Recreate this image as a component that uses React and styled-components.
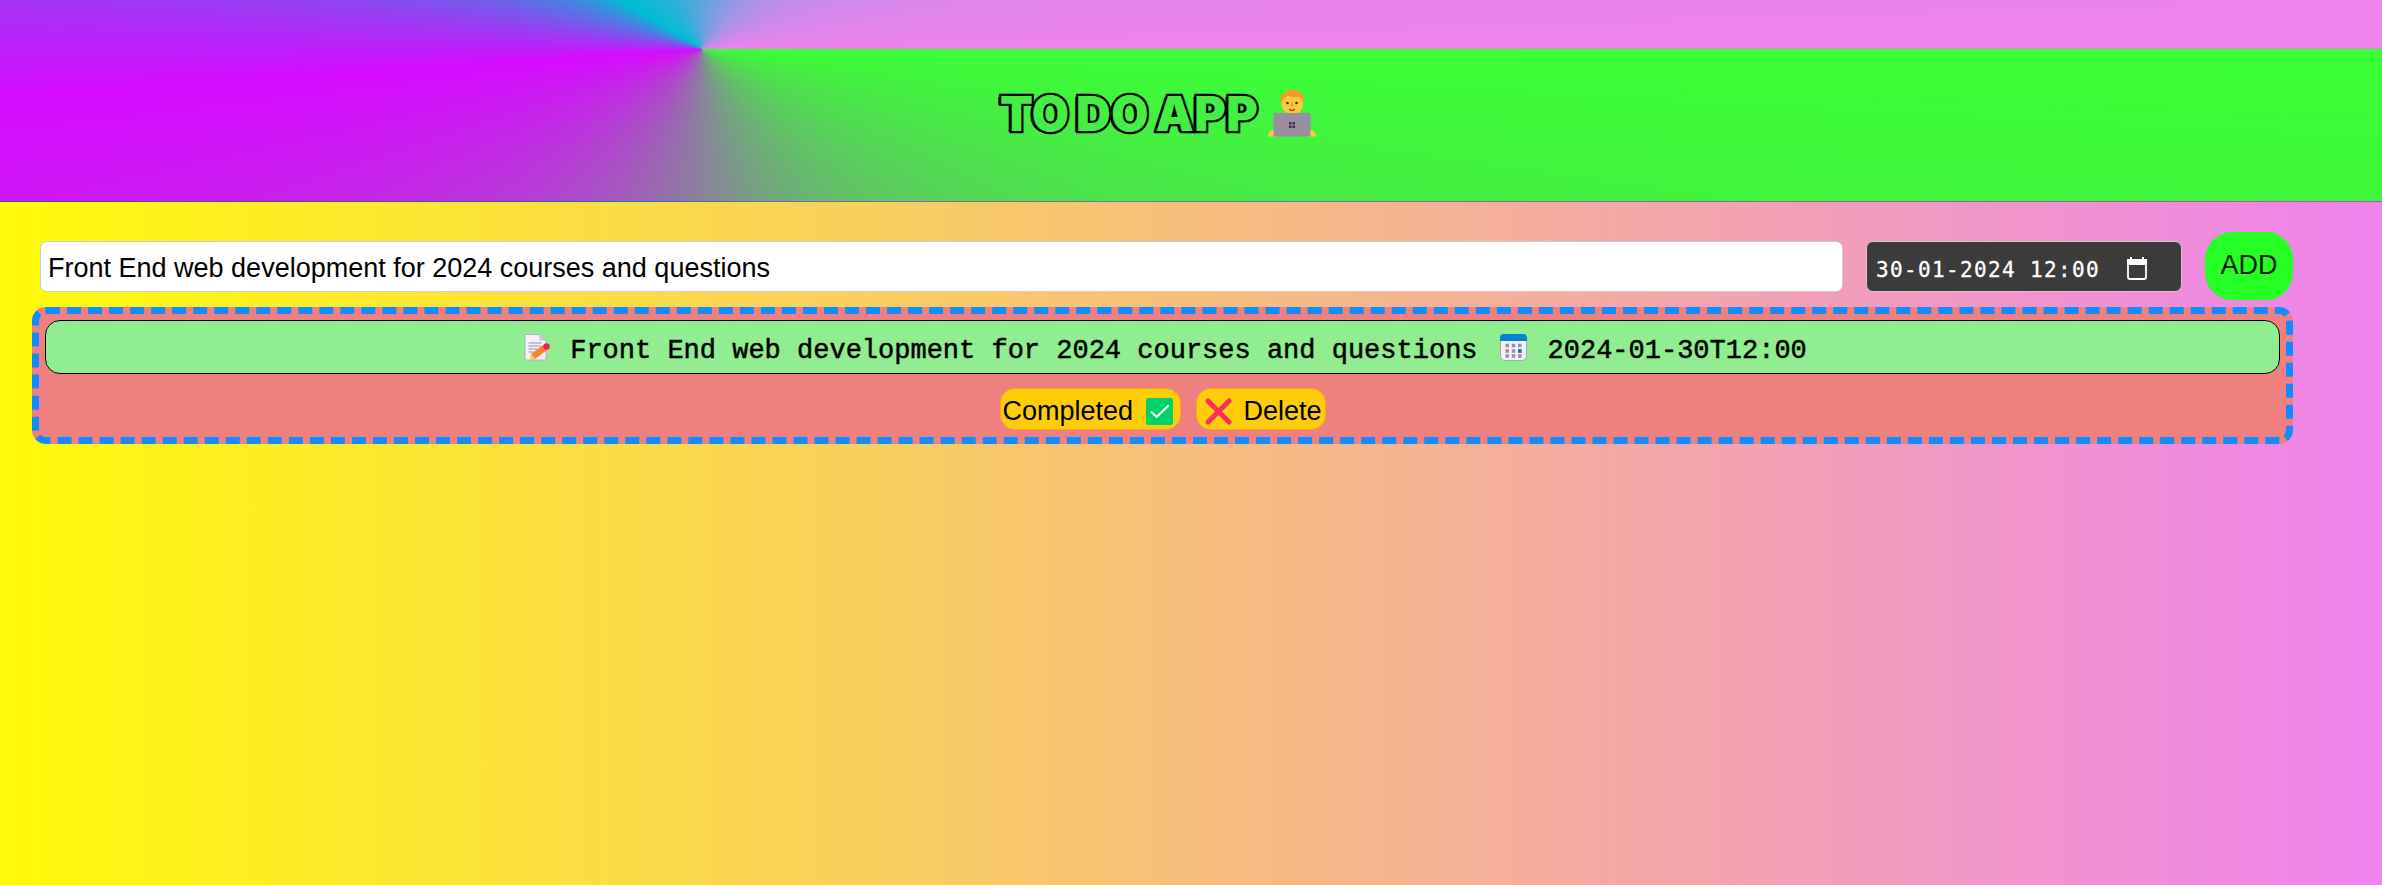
import React from 'react';
import styled, { createGlobalStyle } from 'styled-components';

const GlobalStyle = createGlobalStyle`
  * { box-sizing: border-box; }
  body {
    margin: 0;
    min-height: 100vh;
    background: linear-gradient(90deg, #fffb0a, violet);
    font-family: Arial, "Liberation Sans", sans-serif;
  }
`;

const Header = styled.header`
  height: 202px;
  padding: 85px 0 0 997px;
  display: flex;
  align-items: flex-start;
  background: conic-gradient(from 90deg at 702px 49px, #3aff34 0deg, #d60bff 176deg, #00bcd4 211deg, violet 360deg);
  border-bottom: 1px solid rgba(0, 60, 60, 0.4);
`;

const Title = styled.h1`
  margin: 0;
  padding-left: 3px;
  width: 271px;
  font: 900 48px/57px Inter, sans-serif;
  letter-spacing: 0.5px;
  word-spacing: -3.5px;
  white-space: nowrap;
  color: #42ef42;
  -webkit-text-stroke: 4.5px #000;
  paint-order: stroke fill;
  text-shadow: -1px 0 0 #000, -2px 1px 0 #000, -3px 1px 0 #000;
`;

const HeaderIcon = styled.svg`
  width: 48px;
  height: 48px;
  margin-top: 4px;
`;

const Main = styled.main`
  width: 2261px;
  margin: 30px 0 0 32px;
`;

const Form = styled.form`
  display: flex;
  align-items: center;
  height: 68px;
  padding-left: 8px;
`;

const TaskInput = styled.input`
  width: 1803px;
  height: 51px;
  padding: 5px 7px 0;
  border: 1px solid #ccc;
  border-radius: 7px;
  background: #fff;
  color: #000;
  font: 27px "Liberation Sans", sans-serif;
  outline: 0;
`;

const DateField = styled.div`
  display: flex;
  align-items: center;
  width: 316px;
  height: 51px;
  margin: 0 23px 0 23px;
  padding: 4px 34px 0 9px;
  justify-content: space-between;
  border: 1px solid #ccc;
  border-radius: 7px;
  background: #3b3b3b;
  color: #fff;
  font: 21px "DejaVu Sans Mono", monospace;
  letter-spacing: 1.35px;
  white-space: nowrap;
`;

const DateText = styled.span`
  padding-top: 4px;
  -webkit-text-stroke: 0.3px #fff;
`;

const AddButton = styled.button`
  flex: 1;
  height: 68px;
  padding: 0 0 2px;
  border: 0;
  border-radius: 27px;
  background: #26ff26;
  color: #052005;
  font: 27px "Liberation Sans", sans-serif;
`;

const TaskCard = styled.section`
  height: 137px;
  margin-top: 7px;
  padding: 6px;
  border: 7px dashed #108cff;
  border-radius: 14px;
  background: lightcoral;
`;

const TaskTitle = styled.div`
  display: flex;
  align-items: center;
  justify-content: center;
  height: 54px;
  padding: 8px 0 0 6px;
  border: 1px solid #000;
  border-radius: 15px;
  background: lightgreen;
  color: #000;
  font: 27px "Liberation Mono", monospace;
  -webkit-text-stroke: 0.5px #000;
  white-space: pre;
`;

const Actions = styled.div`
  display: flex;
  justify-content: center;
  gap: 15px;
  margin-top: 14px;
`;

const ActionButton = styled.button`
  display: flex;
  align-items: center;
  justify-content: space-between;
  width: ${p => p.$width}px;
  height: 42px;
  padding: ${p => p.$padding};
  border: 1px solid #f3a92c;
  border-radius: 15px;
  background: #ffcc08;
  color: #000;
  font: 27px "Liberation Sans", sans-serif;
`;

const Icon = styled.svg`
  width: 27px;
  height: 27px;
  flex: none;
  margin: ${p => p.$margin || 0};
`;

const Technologist = () => (
  <HeaderIcon viewBox="0 0 48 48">
    <path d="M0 47.500Q0 41 6 41V47.500ZM48 47.500Q48 41 42 41V47.500Z" fill="#ffc83d" />
    <path d="M13 14C11 5 16 3 19 3C20 0 26 0 28 2C34 1 37 7 35 14Z" fill="#f59b23" />
    <path d="M13.500 13.500Q16 8 20 7Q27 9 32 8Q34 10 35 13.500V16Q34 25 24 25Q14 24 13.500 16Z" fill="#ffc83d" />
    <circle cx="19.500" cy="14" r="1.300" fill="#402a32" />
    <circle cx="28.500" cy="14" r="1.300" fill="#402a32" />
    <path d="M24 14v3" stroke="#e58b22" strokeWidth="1.500" />
    <path d="M21 20Q24 23 27 20" fill="none" stroke="#a64b22" strokeWidth="1.300" />
    <rect x="5.500" y="24" width="37" height="23.500" rx="1" fill="#998fa0" />
    <path d="M21 33h2.500v2.500h-2.500zM24.500 33h2.500v2.500h-2.500zM21 36.500h2.500v2.500h-2.500zM24.500 36.500h2.500v2.500h-2.500z" fill="#46275f" />
  </HeaderIcon>
);

const Memo = () => (
  <Icon viewBox="0 0 27 27" $margin="0 19px 8px 0">
    <path d="M2 .5h14l6 6V25q0 1-1 1H2q-1 0-1-1V1.500q0-1 1-1" fill="#f4eff8" stroke="#b9aec2" />
    <path d="M15.500 1v5.500H22" fill="#cdc4d6" />
    <path d="M4.500 9h13M4.500 12h12M4.500 15h9M4.500 18h5" stroke="#9b8fae" />
    <path d="m7 20 12-9 4 5-12 9-5 1z" fill="#ff822d" />
    <path d="m7 20-1.500 6 5.500-1z" fill="#ffce7c" />
    <circle cx="22.500" cy="12.500" r="3.200" fill="#e9234f" />
  </Icon>
);

const CalendarEmoji = () => (
  <Icon viewBox="0 0 27 27" $margin="0 21px 8px 22px">
    <rect x=".5" y=".5" width="26" height="26" rx="4" fill="#f4eff8" stroke="#a9a4b6" />
    <path d="M0 7V4Q0 0 4 0h19q4 0 4 4v3Z" fill="#0084ce" />
    <path d="M5.500 11.500h16M5.500 17h16M5.500 22h16" stroke="#998eab" strokeWidth="3.500" strokeDasharray="3.500 2.750" />
    <path d="M18 15.300h3.500v3.500H18z" fill="#0074ba" />
  </Icon>
);

export default function App() {
  return (
    <>
      <GlobalStyle />
      <Header>
        <Title>TO DO APP</Title>
        <Technologist />
      </Header>
      <Main>
        <Form onSubmit={e => e.preventDefault()}>
          <TaskInput defaultValue="Front End web development for 2024 courses and questions" />
          <DateField>
            <DateText>30-01-2024 12:00</DateText>
            <svg width="20" height="23" viewBox="0 0 20 23" fill="none">
              <path d="M1 4h18v16q0 2-2 2H3q-2 0-2-2Z" stroke="#fff" strokeWidth="1.800" />
              <path d="M0 2h20v6H0zM3 0h2v3H3zM15 0h2v3h-2z" fill="#fff" />
            </svg>
          </DateField>
          <AddButton>ADD</AddButton>
        </Form>
        <TaskCard>
          <TaskTitle>
            <Memo />
            <span>Front End web development for 2024 courses and questions</span>
            <CalendarEmoji />
            <span>2024-01-30T12:00</span>
          </TaskTitle>
          <Actions>
            <ActionButton $width={181} $padding="5px 7px 0 2px">
              Completed
              <Icon viewBox="0 0 27 27">
                <rect width="27" height="27" rx="2.500" fill="#00d26a" />
                <path d="m5.500 14 5 5L22 8" fill="none" stroke="#fff" strokeWidth="2.200" strokeLinecap="round" strokeLinejoin="round" />
              </Icon>
            </ActionButton>
            <ActionButton $width={130} $padding="5px 3px 0 8px">
              <Icon viewBox="0 0 27 27">
                <path d="m3 3 21 21M24 3 3 24" stroke="#f92f60" strokeWidth="5" strokeLinecap="round" />
              </Icon>
              Delete
            </ActionButton>
          </Actions>
        </TaskCard>
      </Main>
    </>
  );
}
